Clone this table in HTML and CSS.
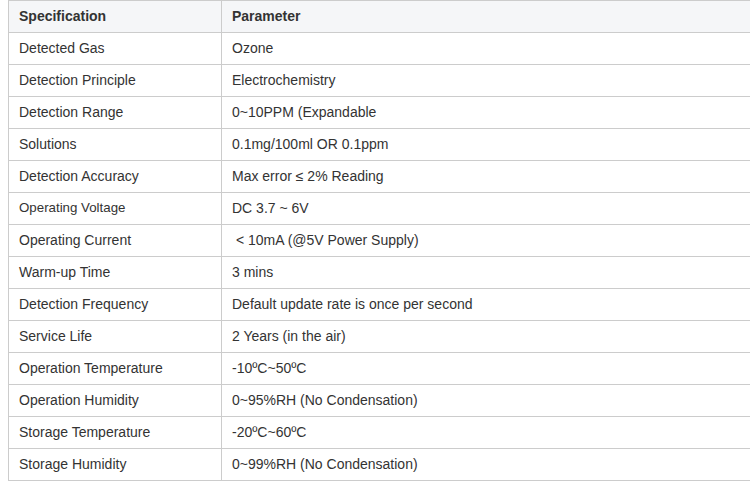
FILE: index.html
```html
<!DOCTYPE html>
<html>
<head>
<meta charset="utf-8">
<link rel="stylesheet" href="styles.css">
</head>
<body>
<table class="spec">
<colgroup><col class="c1"><col class="c2"></colgroup>
<thead>
<tr><th>Specification</th><th>Parameter</th></tr>
</thead>
<tbody>
<tr><td>Detected Gas</td><td>Ozone</td></tr>
<tr><td>Detection Principle</td><td>Electrochemistry</td></tr>
<tr><td>Detection Range</td><td>0~10PPM (Expandable</td></tr>
<tr><td>Solutions</td><td>0.1mg/100ml OR 0.1ppm</td></tr>
<tr><td>Detection Accuracy</td><td>Max error ≤ 2% Reading</td></tr>
<tr><td class="small">Operating Voltage</td><td>DC 3.7 ~ 6V</td></tr>
<tr><td>Operating Current</td><td>&nbsp;&lt; 10mA (@5V Power Supply)</td></tr>
<tr><td>Warm-up Time</td><td>3 mins</td></tr>
<tr><td>Detection Frequency</td><td>Default update rate is once per second</td></tr>
<tr><td>Service Life</td><td>2 Years (in the air)</td></tr>
<tr><td>Operation Temperature</td><td>-10ºC~50ºC</td></tr>
<tr><td>Operation Humidity</td><td>0~95%RH (No Condensation)</td></tr>
<tr><td>Storage Temperature</td><td>-20ºC~60ºC</td></tr>
<tr><td>Storage Humidity</td><td>0~99%RH (No Condensation)</td></tr>
</tbody>
</table>
</body>
</html>
```
FILE: styles.css
```css
html { overflow: hidden; }
body {
  margin: 0 0 0 8px;
  font-family: "Liberation Sans", Arial, sans-serif;
  font-size: 14px;
  color: #333;
  background: #fff;
}
.spec {
  border-collapse: collapse;
  table-layout: fixed;
  width: 780px;
}
.c1 { width: 213px; }
.spec th, .spec td {
  border: 1px solid #ccc;
  padding: 0 10px 2px;
  text-align: left;
  vertical-align: middle;
  box-sizing: border-box;
  height: 32px;
  white-space: nowrap;
}
.spec th {
  background: #f5f6f8;
  font-weight: bold;
  color: #333;
}
.spec td.small { font-size: 13.3px; }
```
